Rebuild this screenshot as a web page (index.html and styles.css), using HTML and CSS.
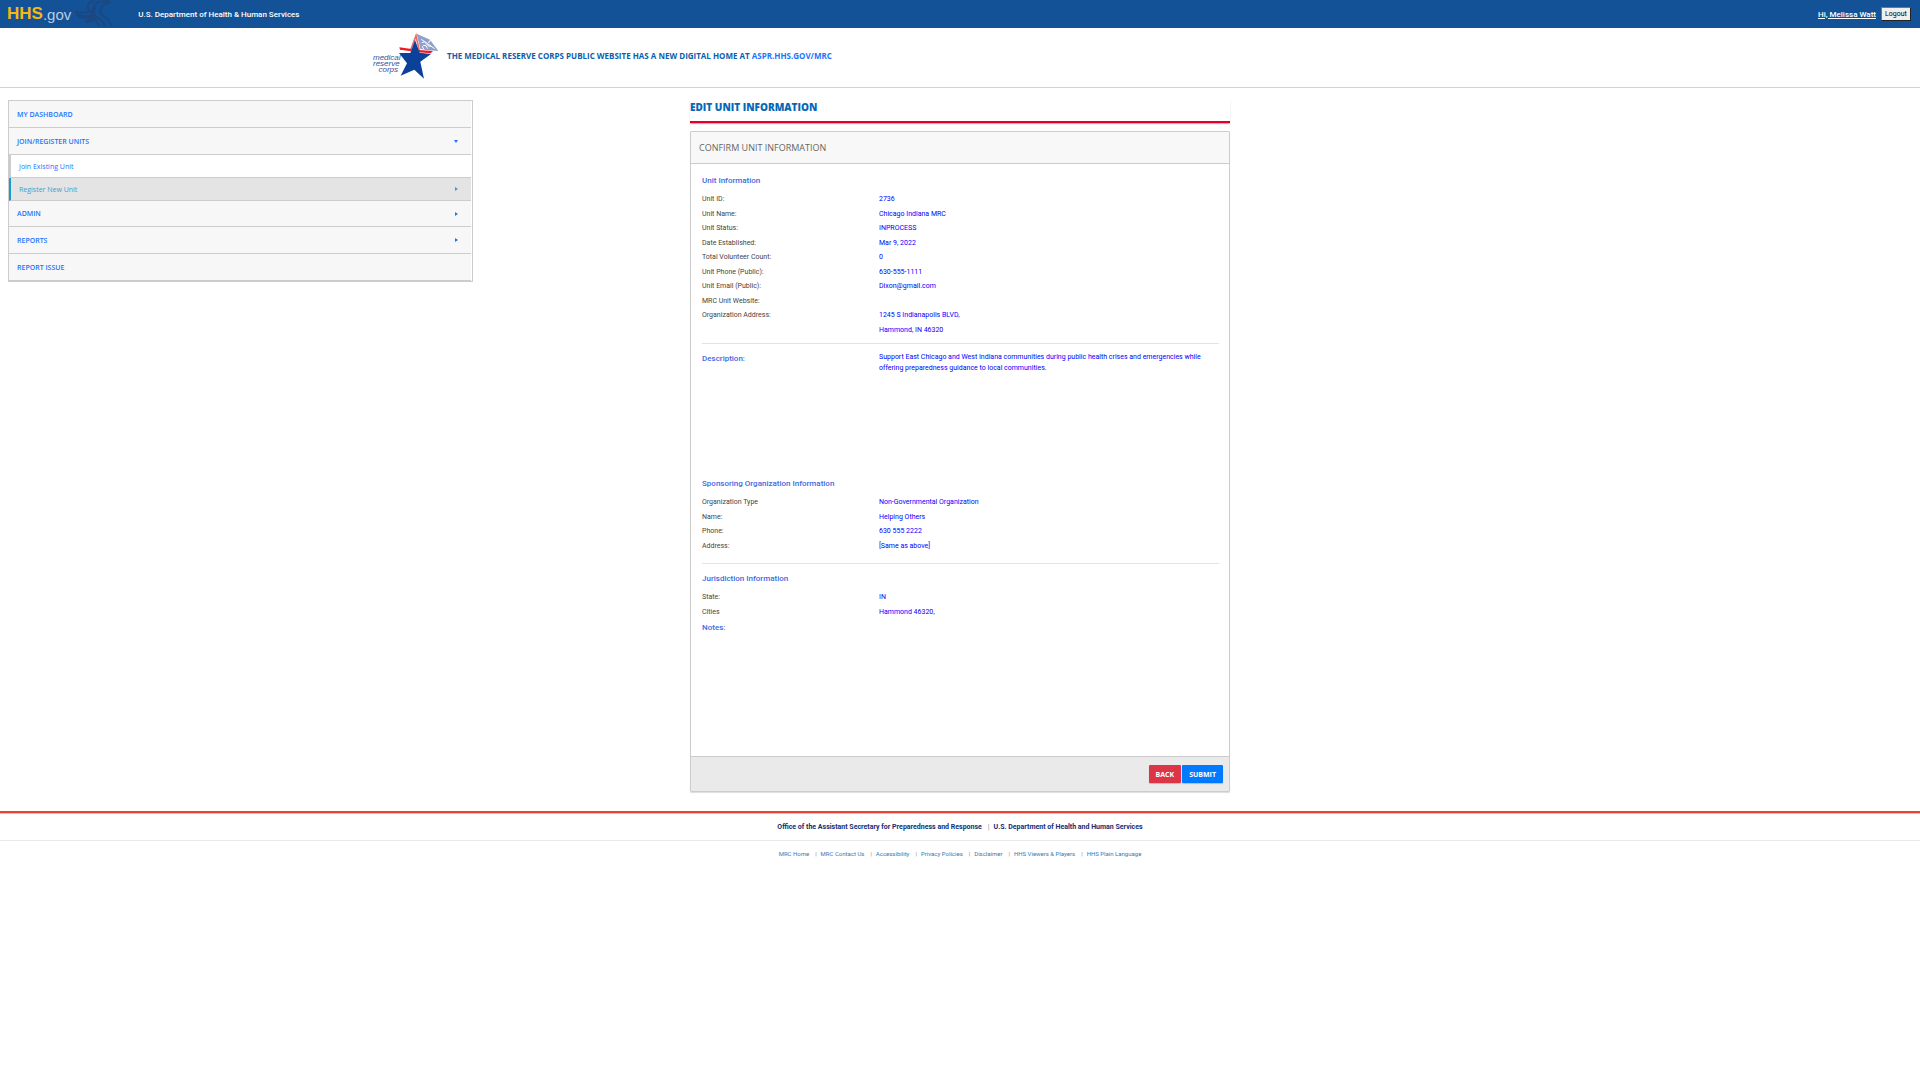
FILE: index.html
```html
<!DOCTYPE html>
<html lang="en">
<head>
    <meta charset="UTF-8">
    <meta name="viewport" content="width=device-width, initial-scale=1.0">
    <title>Edit Unit Information</title>
    <link rel="stylesheet" href="styles.css">
</head>
<body>
    <div class="top-bar">
        <a class="hhs-logo" href="#"><b>HHS</b><span>.gov</span>
            <svg class="eagle" viewBox="0 0 42 28" width="42" height="28" aria-hidden="true">
                <path d="M0 12q8 1 15 0q-4-5 0-10l5-1"/>
                <path d="M1 14q8 4 16 1q-1-8 6-13l11-1"/>
                <path d="M3 16q7 3 15 1q-1 3-7 4"/>
                <path d="M36 2q-10 2-11 9q0 4 5 6q4 3 7 9"/>
                <path d="M21 7q-4 5 0 10q6 2 9 9"/>
                <path d="M10 22q6 0 10-3l4 7"/>
            </svg>
        </a>
        <span class="dept">U.S. Department of Health &amp; Human Services</span>
        <div class="user">
            <a href="#">Hi, Melissa Watt</a>
            <button class="logout">Logout</button>
        </div>
    </div>

    <header class="header">
        <a class="mrc-logo" href="#">
            <span>medical<br>reserve<br>corps</span>
            <svg viewBox="75 6 123 141" width="41" height="47" aria-hidden="true">
                <path fill="#8f9fce" d="M131 11l40 18 25 34-36-3-18-4z"/>
                <path fill="none" stroke="#fff" stroke-width="3" d="M145 28l40 28M146 38q10-6 14 3t14 8M152 57q-8-8 0-11t12 10M176 32q-9-2-9 7"/>
                <path fill="none" stroke="#ef6a6a" stroke-width="5" d="M113 60l16-43 10 46"/>
                <path fill="#ed1c24" d="M79 52l37 5-2 7-33-5zM138 60l42 3-7 7-35-3z"/>
                <path fill="#0b4199" d="M126 30l14 38 34 4-32 23 11 51-29-27-41 18 19-37-24-31 34 0z"/>
            </svg>
        </a>
        <p class="notice">THE MEDICAL RESERVE CORPS PUBLIC WEBSITE HAS A NEW DIGITAL HOME AT <a href="#">ASPR.HHS.GOV/MRC</a></p>
    </header>

    <div class="layout">
        <nav class="side-nav">
            <ul>
                <li><a href="#">MY DASHBOARD</a></li>
                <li><a class="open" href="#">JOIN/REGISTER UNITS</a>
                    <ul class="sub-nav">
                        <li><a href="#">Join Existing Unit</a></li>
                        <li><a class="active more" href="#">Register New Unit</a></li>
                    </ul>
                </li>
                <li><a class="more" href="#">ADMIN</a></li>
                <li><a class="more" href="#">REPORTS</a></li>
                <li><a href="#">REPORT ISSUE</a></li>
            </ul>
        </nav>

        <main class="content">
            <h1>EDIT UNIT INFORMATION</h1>
            <section class="panel">
                <h2 class="panel-header">CONFIRM UNIT INFORMATION</h2>
                <div class="panel-body">
                    <h3>Unit Information</h3>
                    <dl class="fields unit-fields">
                        <dt>Unit ID:</dt><dd>2736</dd>
                        <dt>Unit Name:</dt><dd>Chicago Indiana MRC</dd>
                        <dt>Unit Status:</dt><dd>INPROCESS</dd>
                        <dt>Date Established:</dt><dd>Mar 9, 2022</dd>
                        <dt>Total Volunteer Count:</dt><dd>0</dd>
                        <dt>Unit Phone (Public):</dt><dd>630-555-1111</dd>
                        <dt>Unit Email (Public):</dt><dd>Dixon@gmail.com</dd>
                        <dt>MRC Unit Website:</dt><dd></dd>
                        <dt>Organization Address:</dt><dd>1245 S Indianapolis BLVD,</dd>
                        <dd>Hammond, IN 46320</dd>
                    </dl>
                    <div class="description">
                        <h3>Description:</h3>
                        <p>Support East Chicago and West Indiana communities during public health crises and emergencies while offering preparedness guidance to local communities.</p>
                    </div>
                    <h3>Sponsoring Organization Information</h3>
                    <dl class="fields sponsor-fields">
                        <dt>Organization Type</dt><dd>Non-Governmental Organization</dd>
                        <dt>Name:</dt><dd>Helping Others</dd>
                        <dt>Phone:</dt><dd>630 555 2222</dd>
                        <dt>Address:</dt><dd>[Same as above]</dd>
                    </dl>
                    <div class="jurisdiction">
                        <h3>Jurisdiction Information</h3>
                        <dl class="fields area-fields">
                            <dt>State:</dt><dd>IN</dd>
                            <dt>Cities</dt><dd>Hammond 46320,</dd>
                        </dl>
                        <h3>Notes:</h3>
                    </div>
                </div>
                <div class="panel-footer">
                    <button class="btn btn-back">BACK</button>
                    <button class="btn btn-submit">SUBMIT</button>
                </div>
            </section>
        </main>
    </div>

    <footer class="footer">
        <div class="agencies">
            <a href="#">Office of the Assistant Secretary for Preparedness and Response</a>
            <a href="#">U.S. Department of Health and Human Services</a>
        </div>
        <div class="footer-links">
            <a href="#">MRC Home</a>
            <a href="#">MRC Contact Us</a>
            <a href="#">Accessibility</a>
            <a href="#">Privacy Policies</a>
            <a href="#">Disclaimer</a>
            <a href="#">HHS Viewers &amp; Players</a>
            <a href="#">HHS Plain Language</a>
        </div>
    </footer>
</body>
</html>
```
FILE: styles.css
```css
* {
    box-sizing: border-box;
}

body {
    margin: 0;
    font-family: Roboto, sans-serif;
    font-size: 7px;
    color: #444;
    background-color: #fff;
}

a {
    color: #1a75ff;
    text-decoration: none;
}

h1, h2, h3, p, ul, dl, dd {
    margin: 0;
    padding: 0;
}

ul {
    list-style: none;
}

/* Top bar */
.top-bar {
    display: flex;
    align-items: center;
    height: 28px;
    padding: 0 9px 0 7px;
    background-color: #135296;
    color: #fff;
}

.hhs-logo {
    display: flex;
    align-items: center;
    font-family: "Liberation Sans", Arial, sans-serif;
    font-size: 17px;
    color: #f5b90f;
}

.hhs-logo span {
    font-size: 15px;
    color: #b9cde4;
}

.eagle {
    margin-left: 4px;
    fill: none;
    stroke: #1b4882;
    stroke-width: 2;
}

.dept {
    margin-left: 21px;
    font-size: 8px;
    font-weight: 500;
}

.user {
    display: flex;
    align-items: center;
    gap: 5px;
    margin-left: auto;
}

.user a {
    color: #fff;
    font-size: 8px;
    font-weight: 500;
    text-decoration: underline;
}

.logout {
    width: 30px;
    height: 14px;
    padding: 0;
    border: 1px solid;
    border-color: #777 #222 #222 #777;
    background-color: #efefef;
    font: 7px Roboto, sans-serif;
}

/* Header */
.header {
    display: flex;
    align-items: center;
    height: 60px;
    padding: 0 0 4px 373px;
    border-bottom: 1px solid #d0d3d6;
}

.mrc-logo {
    display: flex;
    align-items: center;
    width: 74px;
    color: #33549c;
    font: italic 8px/6px "Liberation Sans", Arial, sans-serif;
    text-align: right;
}

.mrc-logo span {
    flex: none;
    width: 25px;
    padding-top: 16px;
}

.mrc-logo svg {
    flex: none;
}

.notice {
    font: bold 8px "Open Sans", sans-serif;
    color: #0c60ae;
}

/* Page columns */
.layout {
    display: grid;
    grid-template-columns: 1fr 2fr 1fr;
    align-items: start;
    padding-top: 12px;
}

.side-nav {
    margin: 0 7px 0 8px;
    padding-right: 1px;
    border: 1px solid #ccc;
    font: 600 7px "Open Sans", sans-serif;
}

.side-nav a {
    display: flex;
    align-items: center;
    justify-content: space-between;
    height: 27px;
    padding: 0 13px 0 8px;
    border-bottom: 1px solid #ccc;
    background-color: #f7f7f7;
}

.side-nav li:nth-child(3) a {
    height: 26px;
}

.side-nav .sub-nav a {
    height: 23px;
    border-left: 2px solid #ccc;
    background-color: #fff;
    font-weight: 400;
}

.side-nav .sub-nav .active {
    border-left-color: #169bd5;
    background-color: #e4e4e4;
    color: #3a9fd6;
}

.open::after {
    content: "";
    border: 2px solid transparent;
    border-top: 3px solid currentColor;
    border-bottom: 0;
}

.more::after {
    content: "";
    border: 2px solid transparent;
    border-left: 3px solid currentColor;
    border-right: 0;
}

/* Main panel */
.content {
    width: 540px;
    max-width: 100%;
    margin: 0 auto;
}

h1 {
    height: 23px;
    border-bottom: 2px solid #e4002b;
    box-shadow: 0 1px 1px #bbb;
    font: 800 10px/14px "Open Sans", sans-serif;
    color: #0868b5;
}

.panel {
    margin-top: 8px;
    border: 1px solid #ccc;
    border-radius: 1px;
    box-shadow: 0 1px 1px #ddd;
}

.panel-header {
    padding: 0 8px;
    border-bottom: 1px solid #ccc;
    background-color: #f8f8f8;
    font: 400 9px/31px "Open Sans", sans-serif;
    color: #666;
}

.panel-body {
    min-height: 592px;
    padding: 8px 10px 8px 11px;
}

h3 {
    margin-bottom: 2px;
    font-size: 8px;
    font-weight: 500;
    line-height: 18px;
    color: #4169e1;
}

.fields {
    display: grid;
    grid-template-columns: 177px 1fr;
    grid-auto-rows: 1fr;
    align-items: center;
}

.fields dd {
    grid-column: 2;
}

.fields dd,
.description p {
    color: #00f;
}

.unit-fields {
    height: 145px;
}

.sponsor-fields {
    height: 58px;
}

.area-fields {
    height: 29px;
}

.description {
    display: grid;
    grid-template-columns: 177px 1fr;
    min-height: 132px;
    margin-top: 6px;
    padding-top: 6px;
    border-top: 1px solid #e3e3e3;
}

.description p {
    padding: 2px 12px 0 0;
    line-height: 11px;
}

.jurisdiction {
    margin-top: 10px;
    padding-top: 6px;
    border-top: 1px solid #e3e3e3;
}

.panel-footer {
    display: flex;
    justify-content: flex-end;
    gap: 1px;
    padding: 8px 6px;
    border-top: 1px solid #ccc;
    background-color: #eaeaea;
}

.btn {
    height: 18px;
    padding: 0 7px;
    border: 0;
    border-radius: 1px;
    box-shadow: 0 1px 1px #bbb;
    font: bold 7px "Open Sans", sans-serif;
    color: #fff;
}

.btn-back {
    background-color: #dc3545;
}

.btn-submit {
    background-color: #007bff;
}

/* Footer */
.footer {
    margin-top: 19px;
    border-top: 2px solid #ee4036;
    box-shadow: inset 0 1px 0 #ccc;
    text-align: center;
}

.agencies {
    display: flex;
    justify-content: center;
    height: 28px;
    line-height: 28px;
    border-bottom: 1px solid #e8e8e8;
    font-size: 7px;
    font-weight: 700;
}

.agencies a {
    color: #112e74;
}

.footer-links {
    display: flex;
    justify-content: center;
    font-size: 6px;
    line-height: 26px;
}

.footer-links a {
    color: #337ab7;
}

.footer a + a::before {
    content: "|";
    margin: 0 4px 0 6px;
    font-weight: 400;
    color: #888;
}
```
